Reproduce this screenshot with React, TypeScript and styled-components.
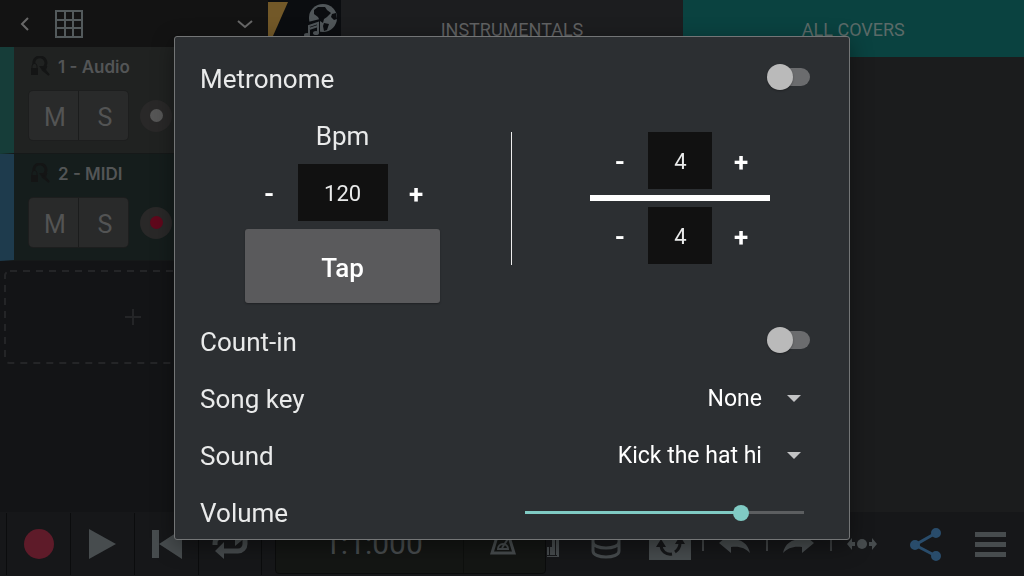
import React, { useState } from "react";
import styled, { createGlobalStyle } from "styled-components";

const GlobalStyle = createGlobalStyle`
  * { box-sizing: border-box; }
  body { margin: 0; background: #141517; font-family: Roboto, "Liberation Sans", sans-serif; overflow: hidden; }
  button, input, select { font-family: inherit; margin: 0; }
  button { padding: 0; border: 0; background: none; color: inherit; }
  svg { display: block; }
`;

const Studio = styled.div`
  min-height: 100vh;
  display: flex;
  flex-direction: column;
  color: #535556;
`;

const Workspace = styled.div`
  flex: 1;
  display: grid;
  grid-template-columns: 1fr 2fr;
  background: #1b1c1d;
`;

const Sidebar = styled.aside`
  background: #131416;
`;

const SidebarHeader = styled.header`
  height: 47px;
  display: flex;
  align-items: center;
  background: #131313;
`;

const HeaderButton = styled.button<{ $width: number }>`
  width: ${(p) => p.$width}px;
  height: 46px;
  display: grid;
  place-items: center;
`;

const Spacer = styled.div`
  flex: 1;
`;

const Artwork = styled.div`
  width: 73px;
  height: 47px;
  overflow: hidden;
`;

const Track = styled.section<{ $stripe: string; $fill: string }>`
  height: 107px;
  padding: 8px 0 0 14px;
  border-left: 14px solid ${(p) => p.$stripe};
  border-bottom: 1px solid #161919;
  background: ${(p) => p.$fill};
`;

const TrackTitle = styled.div`
  height: 24px;
  display: flex;
  align-items: center;
  gap: 7px;
  font: 600 17px/24px Inter, sans-serif;
`;

const TrackControls = styled.div`
  display: flex;
  align-items: center;
  gap: 11px;
  margin-top: 11px;
`;

const MuteSolo = styled.div`
  display: grid;
  grid-template-columns: 1fr 1fr;
  gap: 1px;
  width: 101px;
  height: 51px;
  border: 1px solid #1d1e1e;
  border-radius: 5px;
  overflow: hidden;
  background: #1b1c1c;
`;

const ToggleKey = styled.button`
  background: #292a2a;
  color: #535454;
  font-size: 25px;
  padding: 4px 0 0 3px;
`;

const ArmButton = styled.button<{ $dot: string }>`
  width: 32px;
  height: 32px;
  border-radius: 50%;
  background: #292828;
  display: grid;
  place-items: center;
  &::before {
    content: "";
    width: 13px;
    height: 13px;
    border-radius: 50%;
    background: ${(p) => p.$dot};
  }
`;

const AddTrack = styled.button`
  display: block;
  width: 258px;
  height: 94px;
  margin: 9px 4px;
  color: #242527;
  svg { width: 100%; height: 100%; }
`;

const Timeline = styled.main`
  display: grid;
  grid-template-columns: 1fr 1fr;
  align-items: start;
`;

const SongTab = styled.button<{ $active?: boolean }>`
  height: 57px;
  padding-top: 2px;
  background: ${(p) => (p.$active ? "#0a4240" : "#1c1d1f")};
  color: ${(p) => (p.$active ? "#5b6a68" : "#606162")};
  font-size: 18px;
`;

const Transport = styled.footer`
  height: 64px;
  display: flex;
  align-items: center;
  padding: 0 2px 0 6px;
  background: #161719;
  color: #474c4e;
`;

const TransportKey = styled.button`
  width: 64px;
  height: 62px;
  display: grid;
  place-items: center;
  border-left: 1px solid #0b0c0d;
  &:nth-child(4) { border-right: 1px solid #0b0c0d; }
`;

const Clock = styled.div`
  display: flex;
  width: 271px;
  height: 60px;
  margin-left: 13px;
  border: 1px solid #0b0c0c;
  border-radius: 4px;
  background: #141614;
`;

const ClockTime = styled.div`
  width: 188px;
  padding: 12px 0 0 48px;
  border-right: 1px solid #0e100e;
  font-size: 30px;
  line-height: 34px;
`;

const MetronomeKey = styled.button`
  flex: 1;
  display: grid;
  place-items: center;
  padding: 0 4px 4px 0;
`;

const ToolStrip = styled.div`
  flex: 1;
  display: flex;
`;

const KeysButton = styled.button`
  width: 28px;
  height: 62px;
  padding: 0 0 18px 1px;
  display: flex;
  align-items: flex-end;
`;

const ToolKey = styled.button<{ $tick?: string }>`
  flex: 1;
  height: 62px;
  display: grid;
  place-items: center;
  background: linear-gradient(${(p) => p.$tick ?? "transparent"}, ${(p) => p.$tick ?? "transparent"}) left 20px / 2px 18px no-repeat;
`;

const Overlay = styled.div`
  position: fixed;
  inset: 0;
  padding: 36px 0;
  display: flex;
  justify-content: center;
`;

const Dialog = styled.div`
  width: 66%;
  padding: 13px 38px 0 25px;
  overflow: hidden;
  background: #2c2f32;
  border: 1px solid #737576;
  border-radius: 3px;
  box-shadow: 0 6px 22px rgba(0, 0, 0, 0.4);
  color: #e9eaea;
`;

const SettingRow = styled.div`
  height: 57px;
  display: flex;
  align-items: center;
  justify-content: space-between;
`;

const SettingLabel = styled.label`
  font-size: 26px;
  line-height: 32px;
`;

const Switch = styled.input`
  appearance: none;
  position: relative;
  width: 42px;
  height: 18px;
  border-radius: 9px;
  background: #6b6c6e;
  && { margin: 0 1px 3px 0; }
  &::before {
    content: "";
    position: absolute;
    left: -1px;
    top: -4px;
    width: 26px;
    height: 26px;
    border-radius: 50%;
    background: #bababa;
    box-shadow: 0 1px 2px rgba(0, 0, 0, 0.3);
  }
  &:checked::before { left: 17px; background: #80cbc4; }
`;

const TempoPanel = styled.div`
  height: 206px;
  display: grid;
  grid-template-columns: 311px 1px 1fr;
  padding-top: 13px;
`;

const TempoColumn = styled.div`
  display: flex;
  flex-direction: column;
  align-items: center;
  width: 285px;
`;

const TempoLabel = styled.label`
  font-size: 26px;
  line-height: 32px;
  margin-bottom: 12px;
`;

const Stepper = styled.div`
  display: flex;
  align-items: center;
`;

const StepButton = styled.button`
  width: 57px;
  height: 57px;
  padding-top: 2px;
  color: #fff;
  font-size: 26px;
  font-weight: 700;
`;

const NumberBox = styled.input<{ $width: number }>`
  width: ${(p) => p.$width}px;
  height: 57px;
  padding: 2px 0 0;
  border: 0;
  background: #111;
  color: #e9eaea;
  font-size: 22px;
  text-align: center;
`;

const TapButton = styled.button`
  width: 195px;
  height: 74px;
  margin-top: 8px;
  padding-top: 3px;
  border-radius: 3px;
  background: #5a5a5c;
  box-shadow: 0 1px 2px rgba(0, 0, 0, 0.3);
  color: #fff;
  font-size: 26px;
  font-weight: 500;
`;

const Divider = styled.div`
  height: 133px;
  margin-top: 12px;
  background: #eee;
`;

const SignatureColumn = styled.div`
  display: flex;
  flex-direction: column;
  align-items: center;
  gap: 6px;
  margin-top: 12px;
  padding-left: 38px;
`;

const FractionBar = styled.div`
  width: 180px;
  height: 6px;
  background: #fff;
`;

const SelectWrap = styled.div`
  display: flex;
  align-items: center;
  gap: 25px;
  margin-right: 10px;
`;

const Select = styled.select`
  appearance: none;
  field-sizing: content;
  padding: 0;
  border: 0;
  background: none;
  color: #fff;
  font-size: 23px;
  line-height: 32px;
`;

const Caret = styled.span`
  border: 7px solid transparent;
  border-top-color: #c3c4c5;
  border-bottom: 0;
`;

const Slider = styled.input`
  appearance: none;
  width: 279px;
  height: 16px;
  background: none;
  && { margin-right: 7px; }
  &::-webkit-slider-runnable-track {
    height: 3px;
    background: linear-gradient(to right, #80cbc4 78%, #5c5e60 78%);
  }
  &::-webkit-slider-thumb {
    appearance: none;
    width: 16px;
    height: 16px;
    margin-top: -6px;
    border-radius: 50%;
    background: #80cbc4;
  }
`;

const InputIcon = () => (
  <svg width="23" height="22" viewBox="0 0 23 22" fill="none" stroke="#141515" strokeWidth="2">
    <path d="M6 8a6 6 0 1 1 9 4" strokeWidth="3" />
    <path d="M13 11h5l-1 3 4 5-6-5z" fill="#141515" />
    <path d="M4 12v-2a2 2 0 0 1 5 0v2" strokeWidth="1" />
    <path d="M3 12h7v7H3z" fill="#141515" stroke="none" />
  </svg>
);

const CoverArt = () => (
  <svg width="73" height="47" viewBox="0 0 73 47">
    <path d="M0 0h73v47H0z" fill="#0b0d10" />
    <path d="M0 2h20L5 36l-5 10z" fill="#725828" />
    <circle cx="55" cy="18" r="14" fill="#505659" />
    <path d="M46 10l4-3h7l2 3 4 3-4 4-3 2-1 4-3-2-2-4-4-3zM56 23l5 1-2 6-3 1-1-5zM64 14l4-1 1 6-3 1-3-3z" fill="#0b0d10" />
    <path d="M36 38V23l16-4v19z" fill="#0b0d10" />
    <path d="M41 35V26l9-3v10M41 29l9-3" fill="none" stroke="#505659" strokeWidth="2" />
    <ellipse cx="39" cy="35" rx="3" ry="2" fill="#505659" />
    <ellipse cx="48" cy="33" rx="3" ry="2" fill="#505659" />
  </svg>
);

interface TrackProps { name: string; stripe: string; fill: string; dot: string }

const TrackStrip = ({ name, stripe, fill, dot }: TrackProps) => (
  <Track $stripe={stripe} $fill={fill}>
    <TrackTitle><InputIcon />{name}</TrackTitle>
    <TrackControls>
      <MuteSolo><ToggleKey>M</ToggleKey><ToggleKey>S</ToggleKey></MuteSolo>
      <ArmButton $dot={dot} aria-label={`Arm ${name}`} />
    </TrackControls>
  </Track>
);

interface NumberStepperProps { id?: string; label: string; initial: number; width: number }

const NumberStepper = ({ id, label, initial, width }: NumberStepperProps) => {
  const [value, setValue] = useState(initial);
  return (
    <Stepper>
      <StepButton onClick={() => setValue(value - 1)}>-</StepButton>
      <NumberBox id={id} aria-label={label} $width={width} value={value} onChange={(e) => setValue(Number(e.target.value) || 0)} />
      <StepButton onClick={() => setValue(value + 1)}>+</StepButton>
    </Stepper>
  );
};

export default function App() {
  return (
    <>
      <GlobalStyle />
      <Studio>
        <Workspace>
          <Sidebar>
            <SidebarHeader>
              <HeaderButton $width={50} aria-label="Back">
                <svg width="10" height="16" viewBox="0 0 10 16" fill="none" stroke="#686868" strokeWidth="2"><path d="M8 2L2 8l6 6" /></svg>
              </HeaderButton>
              <HeaderButton $width={38} aria-label="Grid">
                <svg width="28" height="28" viewBox="0 0 28 28" fill="none" stroke="#535a5c" strokeWidth="2"><path d="M1 1h26v26H1zM10 1v26M18 1v26M1 10h26M1 18h26" /></svg>
              </HeaderButton>
              <Spacer />
              <HeaderButton $width={47} aria-label="Expand">
                <svg width="16" height="10" viewBox="0 0 16 10" fill="none" stroke="#686868" strokeWidth="2"><path d="M1 2l7 6 7-6" /></svg>
              </HeaderButton>
              <Artwork><CoverArt /></Artwork>
            </SidebarHeader>
            <TrackStrip name="1 - Audio" stripe="#163d39" fill="#202221" dot="#565656" />
            <TrackStrip name="2 - MIDI" stripe="#1e3b4d" fill="#151d1c" dot="#60081c" />
            <AddTrack aria-label="Add track">
              <svg viewBox="0 0 258 94" fill="none" stroke="currentColor" strokeWidth="2">
                <rect x="1" y="1" width="256" height="92" rx="5" strokeDasharray="7 6" />
                <path d="M121 47h16M129 39v16" />
              </svg>
            </AddTrack>
          </Sidebar>
          <Timeline>
            <SongTab>INSTRUMENTALS</SongTab>
            <SongTab $active>ALL COVERS</SongTab>
          </Timeline>
        </Workspace>
        <Transport>
          <TransportKey aria-label="Record">
            <svg width="30" height="30" viewBox="0 0 30 30"><circle cx="15" cy="15" r="15" fill="#5e1b29" /></svg>
          </TransportKey>
          <TransportKey aria-label="Play">
            <svg width="27" height="30" viewBox="0 0 27 30" fill="currentColor"><path d="M0 0l27 15L0 30z" /></svg>
          </TransportKey>
          <TransportKey aria-label="Rewind">
            <svg width="30" height="30" viewBox="0 0 30 30" fill="currentColor"><path d="M0 1h7v28H0zM30 0v30L7 15z" /></svg>
          </TransportKey>
          <TransportKey aria-label="Loop">
            <svg width="36" height="32" viewBox="0 0 36 32" fill="none" stroke="currentColor" strokeWidth="5">
              <path d="M3 17v-2a6 6 0 0 1 6-6h15M33 12v4a7 7 0 0 1-7 7H11" />
              <path d="M23 0l11 9-11 9zM12 14v17L3 23z" fill="currentColor" stroke="none" />
            </svg>
          </TransportKey>
          <Clock>
            <ClockTime>1:1:000</ClockTime>
            <MetronomeKey aria-label="Metronome">
              <svg width="26" height="28" viewBox="0 0 26 28" fill="none" stroke="currentColor" strokeWidth="3">
                <path d="M9 2h8l7 23H2z" /><path d="M12 20L21 6" strokeWidth="2" /><path d="M8 21a5 5 0 0 1 10 0z" strokeWidth="2" />
              </svg>
            </MetronomeKey>
          </Clock>
          <ToolStrip>
            <KeysButton aria-label="Keys">
              <svg width="12" height="30" viewBox="0 0 12 30" fill="currentColor">
                <path d="M0 0h12v30H0z" />
                <path d="M0 0h5v20H0zM2 20h1v8H2zM8 0h1v28H8zM0 28h10v1H0z" fill="#161719" />
              </svg>
            </KeysButton>
            <ToolKey aria-label="Instruments">
              <svg width="30" height="30" viewBox="0 0 30 30" fill="none" stroke="currentColor" strokeWidth="3">
                <ellipse cx="15" cy="5" rx="13" ry="4" /><path d="M2 5v17c0 8 26 8 26 0V5M2 13c0 8 26 8 26 0" />
              </svg>
            </ToolKey>
            <ToolKey aria-label="Sync">
              <svg width="42" height="32" viewBox="0 0 42 32">
                <path d="M0 0h42v32H0z" fill="currentColor" />
                <path d="M12 17c0 6 5 10 11 9M26 24c3-2 5-6 5-9M16 7c3-2 7-2 10 0" fill="none" stroke="#161719" strokeWidth="3" />
                <path d="M7 19h10l-5-8zM26 16h10l-5-8z" fill="#161719" />
              </svg>
            </ToolKey>
            <ToolKey $tick="#414446" aria-label="Undo">
              <svg width="31" height="24" viewBox="0 0 31 24" fill="currentColor"><path d="M0 11L12 1v6c11 0 17 5 19 14-5-5-10-7-19-6v6z" /></svg>
            </ToolKey>
            <ToolKey $tick="#414446" aria-label="Redo">
              <svg width="31" height="24" viewBox="0 0 31 24" fill="currentColor"><path d="M31 11L19 1v6C8 7 2 12 0 21c5-5 10-7 19-6v6z" /></svg>
            </ToolKey>
            <ToolKey $tick="#3a3d3f" aria-label="Fit">
              <svg width="30" height="12" viewBox="0 0 30 12" fill="currentColor"><circle cx="15" cy="6" r="5" /><path d="M0 6l5-6v4h3v4H5v4zM30 6l-5-6v4h-3v4h3v4z" /></svg>
            </ToolKey>
            <ToolKey aria-label="Share">
              <svg width="32" height="33" viewBox="0 0 32 33" fill="#294c6b" stroke="#294c6b" strokeWidth="2"><path d="M26 5L5 17l21 11" fill="none" strokeWidth="3" /><circle cx="26" cy="5" r="4" /><circle cx="5" cy="17" r="4" /><circle cx="26" cy="28" r="4" /></svg>
            </ToolKey>
            <ToolKey aria-label="Menu">
              <svg width="31" height="25" viewBox="0 0 31 25" fill="currentColor"><path d="M0 0h31v5H0zM0 10h31v5H0zM0 20h31v5H0z" /></svg>
            </ToolKey>
          </ToolStrip>
        </Transport>
      </Studio>
      <Overlay>
        <Dialog role="dialog" aria-label="Metronome settings">
          <SettingRow>
            <SettingLabel htmlFor="metronome">Metronome</SettingLabel>
            <Switch id="metronome" type="checkbox" />
          </SettingRow>
          <TempoPanel>
            <TempoColumn>
              <TempoLabel htmlFor="bpm">Bpm</TempoLabel>
              <NumberStepper id="bpm" label="Bpm" initial={120} width={90} />
              <TapButton>Tap</TapButton>
            </TempoColumn>
            <Divider />
            <SignatureColumn>
              <NumberStepper label="Beats" initial={4} width={64} />
              <FractionBar />
              <NumberStepper label="Beat unit" initial={4} width={64} />
            </SignatureColumn>
          </TempoPanel>
          <SettingRow>
            <SettingLabel htmlFor="countin">Count-in</SettingLabel>
            <Switch id="countin" type="checkbox" />
          </SettingRow>
          <SettingRow>
            <SettingLabel htmlFor="songkey">Song key</SettingLabel>
            <SelectWrap><Select id="songkey"><option>None</option></Select><Caret /></SelectWrap>
          </SettingRow>
          <SettingRow>
            <SettingLabel htmlFor="sound">Sound</SettingLabel>
            <SelectWrap><Select id="sound"><option>Kick the hat hi</option></Select><Caret /></SelectWrap>
          </SettingRow>
          <SettingRow>
            <SettingLabel htmlFor="volume">Volume</SettingLabel>
            <Slider id="volume" type="range" min="0" max="100" defaultValue="79" />
          </SettingRow>
        </Dialog>
      </Overlay>
    </>
  );
}
